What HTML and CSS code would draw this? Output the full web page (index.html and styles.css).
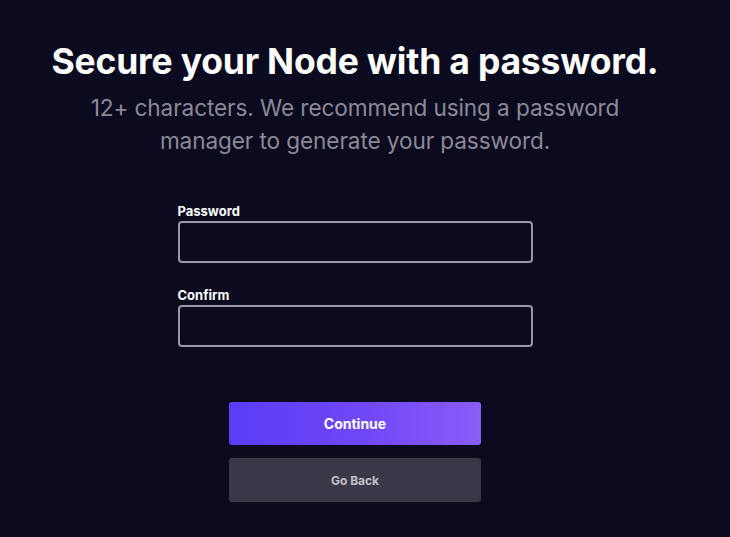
FILE: index.html
```html
<!DOCTYPE html>
<html lang="en">
<head>
<meta charset="utf-8">
<title>Secure your Node</title>
<link rel="stylesheet" href="styles.css">
</head>
<body>
<main class="page">
  <h1 class="title">Secure your Node with a password.</h1>
  <p class="subtitle">12+ characters. We recommend using a password<br>manager to generate your password.</p>
  <form class="form">
    <label class="field">
      <span class="label">Password</span>
      <input class="input" type="password">
    </label>
    <label class="field">
      <span class="label">Confirm</span>
      <input class="input" type="password">
    </label>
    <div class="actions">
      <button type="button" class="btn btn-primary">Continue</button>
      <button type="button" class="btn btn-secondary">Go Back</button>
    </div>
  </form>
</main>
</body>
</html>
```

FILE: styles.css
```css
html, body {
  margin: 0;
  padding: 0;
  height: 100%;
  background: #0c0a1f;
}
body {
  font-family: Inter, "Noto Sans", sans-serif;
  color: #fff;
}
.page {
  width: 710px;
  display: flex;
  flex-direction: column;
  align-items: center;
  padding-top: 40px;
}
.title {
  margin: 0;
  font-size: 35.5px;
  font-weight: 700;
  letter-spacing: -0.2px;
  line-height: 44px;
}
.subtitle {
  margin: 7px 0 0;
  text-align: center;
  font-size: 22.6px;
  letter-spacing: -0.1px;
  line-height: 33px;
  color: #8b8996;
}
.form {
  margin-top: 46px;
  display: flex;
  flex-direction: column;
  align-items: center;
}
.field {
  display: flex;
  flex-direction: column;
  width: 355px;
  margin-bottom: 24px;
}
.label {
  font-size: 13px;
  font-weight: 700;
  line-height: 16px;
  margin-bottom: 2px;
}
.input {
  box-sizing: border-box;
  height: 42px;
  width: 100%;
  background: transparent;
  border: 2px solid #9a98a7;
  border-radius: 4px;
  color: #fff;
  margin: 0;
}
.actions {
  margin-top: 31px;
  display: flex;
  flex-direction: column;
  gap: 13px;
}
.btn {
  width: 252px;
  border: 0;
  border-radius: 3px;
  font-family: inherit;
  font-weight: 700;
  cursor: pointer;
}
.btn-primary {
  height: 43px;
  font-size: 14px;
  color: #fff;
  background: linear-gradient(90deg, #5a3cf6 0%, #7048f7 55%, #8a5df8 100%);
}
.btn-secondary {
  height: 44px;
  font-size: 12px;
  color: #c3c1cb;
  background: #3a3846;
}
```
